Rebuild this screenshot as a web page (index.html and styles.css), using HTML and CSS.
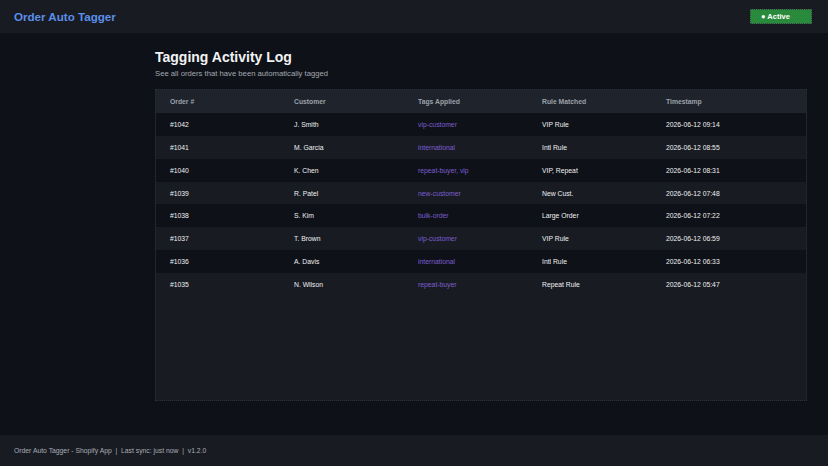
FILE: index.html
```html
<!DOCTYPE html>
<html lang="en">
<head>
    <meta charset="UTF-8">
    <meta name="viewport" content="width=device-width, initial-scale=1.0">
    <title>Order Auto Tagger</title>
    <link rel="stylesheet" href="styles.css">
</head>
<body>

    <div class="header">
        <h1 class="app-title">Order Auto Tagger</h1>
        <span class="status-btn">&#9679; Active</span>
    </div>

    <div class="main">
        <h2 class="page-title">Tagging Activity Log</h2>
        <p class="page-sub">See all orders that have been automatically tagged</p>

        <div class="log-panel">
            <div class="log-row log-head">
                <div>Order #</div>
                <div>Customer</div>
                <div>Tags Applied</div>
                <div>Rule Matched</div>
                <div>Timestamp</div>
            </div>
            <div class="log-row">
                <div>#1042</div><div>J. Smith</div><div class="tag">vip-customer</div><div>VIP Rule</div><div>2026-06-12 09:14</div>
            </div>
            <div class="log-row">
                <div>#1041</div><div>M. Garcia</div><div class="tag">international</div><div>Intl Rule</div><div>2026-06-12 08:55</div>
            </div>
            <div class="log-row">
                <div>#1040</div><div>K. Chen</div><div class="tag">repeat-buyer, vip</div><div>VIP, Repeat</div><div>2026-06-12 08:31</div>
            </div>
            <div class="log-row">
                <div>#1039</div><div>R. Patel</div><div class="tag">new-customer</div><div>New Cust.</div><div>2026-06-12 07:48</div>
            </div>
            <div class="log-row">
                <div>#1038</div><div>S. Kim</div><div class="tag">bulk-order</div><div>Large Order</div><div>2026-06-12 07:22</div>
            </div>
            <div class="log-row">
                <div>#1037</div><div>T. Brown</div><div class="tag">vip-customer</div><div>VIP Rule</div><div>2026-06-12 06:59</div>
            </div>
            <div class="log-row">
                <div>#1036</div><div>A. Davis</div><div class="tag">international</div><div>Intl Rule</div><div>2026-06-12 06:33</div>
            </div>
            <div class="log-row">
                <div>#1035</div><div>N. Wilson</div><div class="tag">repeat-buyer</div><div>Repeat Rule</div><div>2026-06-12 05:47</div>
            </div>
        </div>
    </div>

    <div class="footer">
        Order Auto Tagger - Shopify App &nbsp;|&nbsp; Last sync: just now &nbsp;|&nbsp; v1.2.0
    </div>

</body>
</html>
```

FILE: styles.css
```css
body {
    font-family: "Liberation Sans", Arial, sans-serif;
    margin: 0;
    padding: 0;
    background-color: #0e1117;
    color: #e6e8eb;
    height: 466px;
    display: flex;
    flex-direction: column;
}
.header {
    background-color: #181b22;
    height: 33px;
    display: flex;
    align-items: center;
    justify-content: space-between;
    padding: 0 16px 0 14px;
}
.app-title {
    margin: 0;
    font-size: 11.6px;
    color: #5b8fe8;
}
.status-btn {
    background-color: #2a8a3c;
    color: #fff;
    font-size: 7.5px;
    font-weight: bold;
    width: 62px;
    height: 15px;
    box-sizing: border-box;
    padding-left: 10px;
    display: flex;
    align-items: center;
    border: 1px dotted #3a4048;
}
.main {
    flex: 1;
    padding: 16px 21px 0 155px;
}
.page-title {
    margin: 0;
    font-size: 14px;
    line-height: 16px;
    color: #f2f3f5;
}
.page-sub {
    margin: 4px 0 11px;
    font-size: 7.7px;
    line-height: 9px;
    color: #a4a9b1;
}
.log-panel {
    background-color: #181b22;
    border: 1px dotted #2c3038;
    height: 310px;
}
.log-row {
    display: grid;
    grid-template-columns: 124px 124px 124px 124px 1fr;
    padding-left: 14px;
    height: 22.9px;
    align-items: center;
    font-size: 6.8px;
    color: #eef0f2;
}
.log-row:nth-child(even) {
    background-color: #0e1117;
}
.log-head {
    background-color: #1f232b;
    color: #9ba1aa;
    font-weight: bold;
}
.tag {
    color: #7b5fd0;
}
.footer {
    background-color: #181b22;
    height: 31px;
    display: flex;
    align-items: center;
    padding-left: 14px;
    font-size: 6.8px;
    color: #a8adb5;
}
```
